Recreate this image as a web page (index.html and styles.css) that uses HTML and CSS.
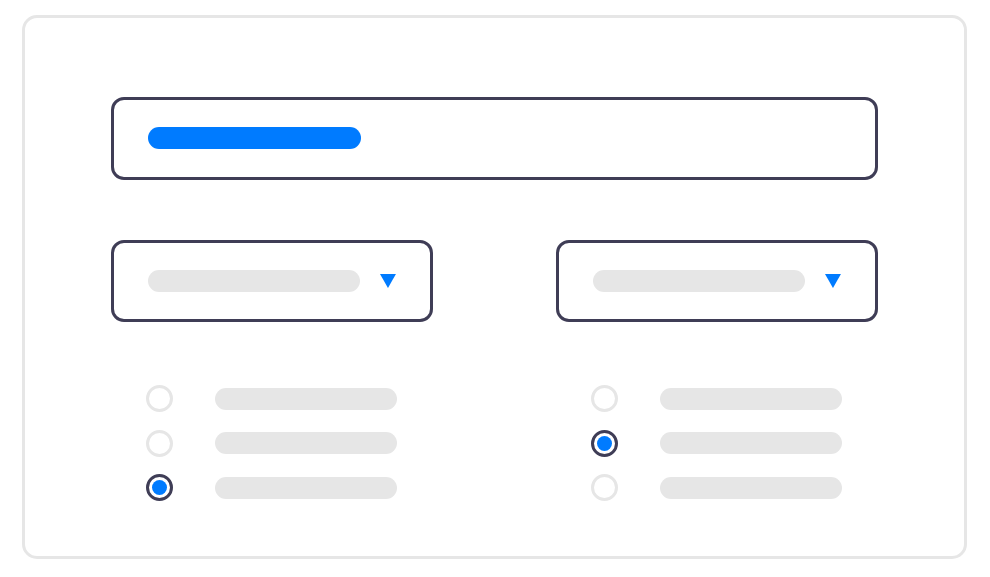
FILE: index.html
```html
<!DOCTYPE html>
<html>
<head>
<meta charset="utf-8">
<link rel="stylesheet" href="styles.css">
</head>
<body>
<div class="card">
  <div class="input"><span class="bar bar-blue"></span></div>
  <div class="selects">
    <div class="select">
      <span class="bar bar-gray"></span>
      <svg class="caret" width="16" height="14" viewBox="0 0 16 14"><polygon points="0,0 16,0 8,14" fill="#007bff"/></svg>
    </div>
    <div class="select">
      <span class="bar bar-gray"></span>
      <svg class="caret" width="16" height="14" viewBox="0 0 16 14"><polygon points="0,0 16,0 8,14" fill="#007bff"/></svg>
    </div>
  </div>
  <div class="groups">
    <div class="group">
      <div class="opt"><span class="radio"></span><span class="line"></span></div>
      <div class="opt"><span class="radio"></span><span class="line"></span></div>
      <div class="opt"><span class="radio on"></span><span class="line"></span></div>
    </div>
    <div class="group">
      <div class="opt"><span class="radio"></span><span class="line"></span></div>
      <div class="opt"><span class="radio on"></span><span class="line"></span></div>
      <div class="opt"><span class="radio"></span><span class="line"></span></div>
    </div>
  </div>
</div>
</body>
</html>
```
FILE: styles.css
```css
* { box-sizing: border-box; }
html, body { margin: 0; padding: 0; background: #fff; }
body { width: 990px; height: 577px; overflow: hidden; font-family: "Liberation Sans", sans-serif; }

.card {
  margin: 15px 0 0 22px;
  width: 945px;
  height: 544px;
  border: 3px solid #e6e6e6;
  border-radius: 15px;
  padding: 79px 86px 0 86px;
}

.input {
  height: 83px;
  border: 3px solid #3f3d56;
  border-radius: 13px;
  padding: 0 34px;
  display: flex;
  align-items: center;
}
.input .bar { margin-top: -2px; }

.bar {
  display: block;
  width: 213px;
  height: 22px;
  border-radius: 11px;
}
.bar-blue { background: #007bff; }
.bar-gray { background: #e6e6e6; }

.selects {
  margin-top: 60px;
  display: flex;
  justify-content: space-between;
}
.select {
  width: 322px;
  height: 82px;
  border: 3px solid #3f3d56;
  border-radius: 13px;
  padding: 0 34px;
  display: flex;
  align-items: center;
}
.caret { margin-left: 20px; margin-top: -1px; display: block; }

.groups {
  margin-top: 63px;
  display: flex;
  justify-content: space-between;
}
.group {
  width: 322px;
  padding-left: 35px;
  display: flex;
  flex-direction: column;
  gap: 17.5px;
}
.opt {
  height: 27px;
  display: flex;
  align-items: center;
}
.radio {
  width: 27px;
  height: 27px;
  border: 3px solid #e6e6e6;
  border-radius: 50%;
  display: flex;
  align-items: center;
  justify-content: center;
  flex: none;
}
.radio.on { border-color: #3f3d56; }
.radio.on::after {
  content: "";
  width: 15px;
  height: 15px;
  border-radius: 50%;
  background: #007bff;
}
.line {
  margin-left: 42px;
  width: 182px;
  height: 22px;
  border-radius: 11px;
  background: #e6e6e6;
}
```
